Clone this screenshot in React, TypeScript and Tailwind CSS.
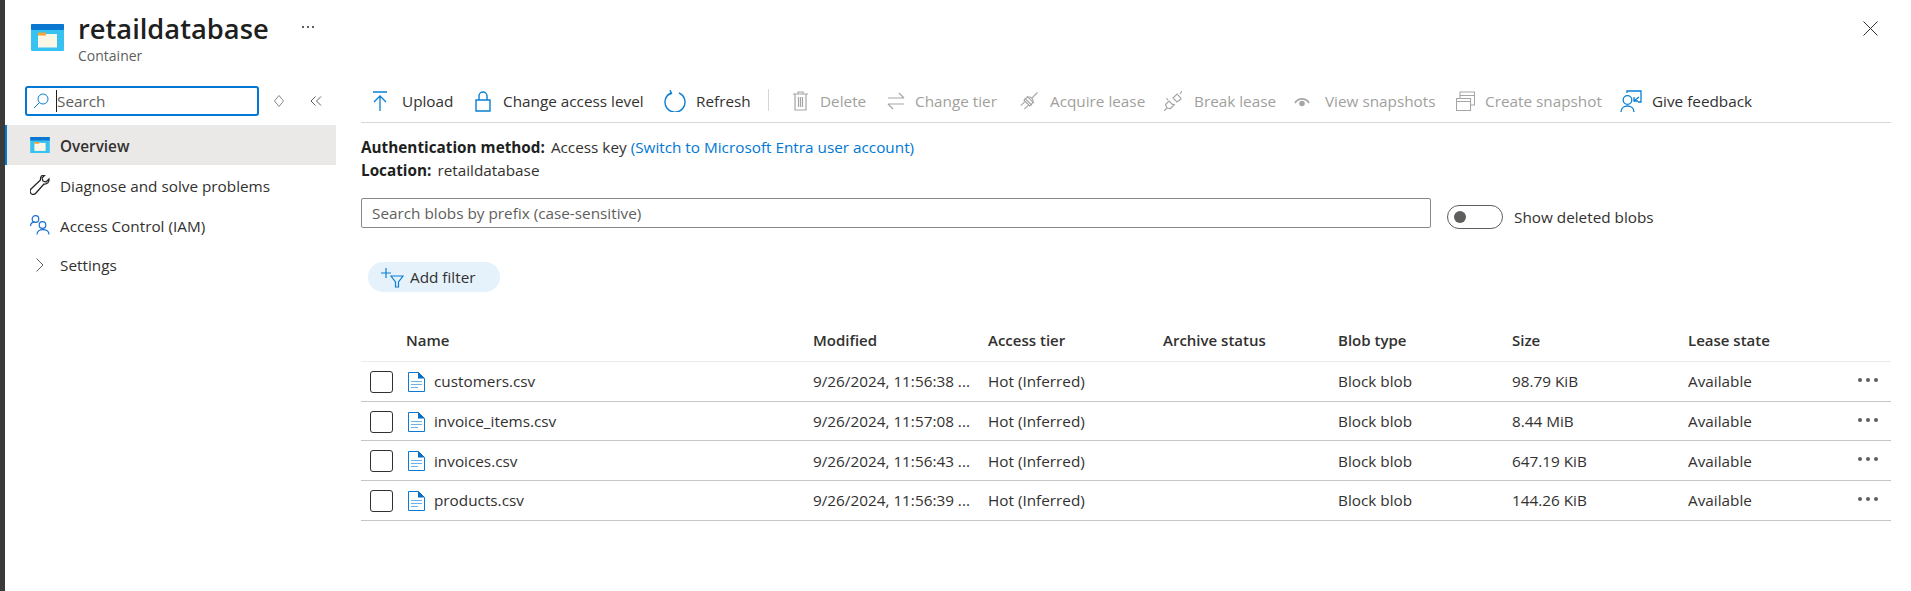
import React from 'react';

const font = "font-['Open_Sans','Liberation_Sans',sans-serif]";

function ContainerIcon({ className }: { className: string }) {
  return (
    <svg viewBox="0 0 33 27" className={className}>
      <rect x="0" y="0" width="33" height="27" rx="1" fill="#37c2f1" />
      <rect x="0" y="0" width="33" height="6" rx="1" fill="#0a78d1" />
      <rect x="7" y="10" width="19" height="13.5" fill="#fbf6e6" />
      <rect x="7" y="8.5" width="8" height="3" fill="#f0a43a" />
    </svg>
  );
}

function FileIcon() {
  return (
    <svg viewBox="0 0 17 20" className="w-[17px] h-[20px] shrink-0">
      <path d="M.5.5h10l6 6v13H.5z" fill="#fff" stroke="#0a7ad6" />
      <path d="M10 0l7 6.5h-7z" fill="#0a6fc2" />
      <path d="M3 9.5h11M3 12.5h11M3 15.5h7" stroke="#6cb2ee" strokeWidth="1.2" />
    </svg>
  );
}

const icon = 'fill-none stroke-current';

const tools = [
  {
    label: 'Upload', w: 'w-[102px]', gap: 'gap-[15px]', on: true,
    svg: <svg viewBox="0 0 14 20" className={`w-[14px] h-[20px] text-[#0b7fd4] ${icon}`}><path d="M0 1h14M7 20V5M1 11l6-6 6 6" strokeWidth="1.3" /></svg>,
  },
  {
    label: 'Change access level', w: 'w-[189px]', gap: 'gap-[12px]', on: true,
    svg: <svg viewBox="0 0 16 21" className={`w-[16px] h-[21px] text-[#0b7fd4] ${icon}`}><path d="M1 9h14v11H1zM4 9V5a4 4 0 0 1 8 0v4" strokeWidth="1.4" /></svg>,
  },
  {
    label: 'Refresh', w: 'w-[129px]', gap: 'gap-[10px]', on: true,
    svg: <svg viewBox="0 0 22 22" className={`w-[22px] h-[22px] text-[#0b7fd4] ${icon}`}><path d="M7 3a10 10 0 1 0 8 0M6 0l1.500 3.500L4 5" strokeWidth="1.4" /></svg>,
  },
  {
    label: 'Delete', w: 'w-[94px]', gap: 'gap-[12px]', on: false,
    svg: <svg viewBox="0 0 15 20" className={`w-[15px] h-[20px] text-[#a6a6a6] ${icon}`}><path d="M0 3h15M5 3V1h5v2M2 3v16h11V3M5.500 6v10M7.500 6v10M9.500 6v10" strokeWidth="1.2" /></svg>,
  },
  {
    label: 'Change tier', w: 'w-[133px]', gap: 'gap-[10px]', on: false,
    svg: <svg viewBox="0 0 18 18" className={`w-[18px] h-[18px] text-[#a6a6a6] ${icon}`}><path d="M1 6h16M12 1l5 5M17 12H1M6 17l-5-5" strokeWidth="1.2" /></svg>,
  },
  {
    label: 'Acquire lease', w: 'w-[144px]', gap: 'gap-[12px]', on: false,
    svg: (
      <svg viewBox="0 0 18 20" className={`w-[18px] h-[20px] text-[#a6a6a6] ${icon}`}>
        <g transform="rotate(45 9 10)" strokeWidth="1.200">
          <path d="M5 7h8v3a4 4 0 0 1-8 0zM9 14v8M6.500 7V1M11.500 7V1" transform="rotate(180 9 10)" />
          <path d="M4 8h10M4 11h10" />
        </g>
      </svg>
    ),
  },
  {
    label: 'Break lease', w: 'w-[130px]', gap: 'gap-[12px]', on: false,
    svg: (
      <svg viewBox="0 0 18 20" className={`w-[18px] h-[20px] text-[#a6a6a6] ${icon}`}>
        <path d="M0 20l3-3M3 17l-1.500-3.500 3.500-3.500 4.500 4.500-3 3zM4 9l-1.500-1.500M9 13l2 1M10 8l-1-1 4-4 3 3 1 2-4 3zM16 3l2-3" strokeWidth="1.200" />
      </svg>
    ),
  },
  {
    label: 'View snapshots', w: 'w-[162px]', gap: 'gap-[15px]', on: false,
    svg: <svg viewBox="0 0 16 12" className="w-[16px] h-[12px] text-[#a6a6a6]"><path d="M1 8a8 8 0 0 1 14 0" fill="none" stroke="currentColor" strokeWidth="1.800" /><circle cx="8" cy="8.500" r="2.800" fill="currentColor" /></svg>,
  },
  {
    label: 'Create snapshot', w: 'w-[164px]', gap: 'gap-[10px]', on: false,
    svg: <svg viewBox="0 0 19 20" className={`w-[19px] h-[20px] text-[#a6a6a6] ${icon}`}><path d="M.5 7.500h14v12H.5zM.5 10.500h14M4 7V4.500h14.500M4 4.500V1h14.500v13H15" strokeWidth="1.100" /></svg>,
  },
  {
    label: 'Give feedback', w: 'w-[140px]', gap: 'gap-[10px]', on: true,
    svg: <svg viewBox="0 0 22 22" className={`w-[22px] h-[22px] text-[#0b7fd4] ${icon}`}><path d="M7 3V1h14v11h-3M19 7l-5 4M14 7v4h4" strokeWidth="1.300" /><circle cx="7.500" cy="10" r="4.300" strokeWidth="1.300" /><path d="M1 22c0-8 13-8 13 0" strokeWidth="1.300" /></svg>,
  },
];

const columns = [
  { label: 'Name', w: 'w-[407px]' },
  { label: 'Modified', w: 'w-[175px]' },
  { label: 'Access tier', w: 'w-[175px]' },
  { label: 'Archive status', w: 'w-[175px]' },
  { label: 'Blob type', w: 'w-[174px]' },
  { label: 'Size', w: 'w-[176px]' },
  { label: 'Lease state', w: 'w-[170px]' },
];

const blobs = [
  { name: 'customers.csv', modified: '9/26/2024, 11:56:38 ...', size: '98.79 KiB' },
  { name: 'invoice_items.csv', modified: '9/26/2024, 11:57:08 ...', size: '8.44 MiB' },
  { name: 'invoices.csv', modified: '9/26/2024, 11:56:43 ...', size: '647.19 KiB' },
  { name: 'products.csv', modified: '9/26/2024, 11:56:39 ...', size: '144.26 KiB' },
];

export default function App() {
  return (
    <div className={`flex h-[591px] bg-white text-[#323130] text-[15.3px] overflow-hidden ${font}`}>
      <div className="w-[5px] bg-[#3b3a39] shrink-0" />
      <div className="flex-1 flex flex-col min-w-0">
        <header className="h-[70px] flex shrink-0">
          <div className="w-[73px] pl-[26px] pt-[24px]">
            <ContainerIcon className="w-[33px] h-[27px]" />
          </div>
          <div className="pt-[11px] w-[224px]">
            <div className="text-[27.3px] leading-[36px] font-semibold text-[#201f1e]">retaildatabase</div>
            <div className="text-[14px] leading-[18px] text-[#605e5c]">Container</div>
          </div>
          <div className="flex gap-[3px] pt-[26px]">
            <i className="w-[2px] h-[2px] bg-[#605e5c]" />
            <i className="w-[2px] h-[2px] bg-[#605e5c]" />
            <i className="w-[2px] h-[2px] bg-[#605e5c]" />
          </div>
          <svg viewBox="0 0 15 15" className="ml-auto mr-[33px] mt-[21px] w-[15px] h-[15px] text-[#323130]">
            <path d="M.5.5l14 14M14.500.5l-14 14" stroke="currentColor" />
          </svg>
        </header>
        <div className="flex flex-1">
          <aside className="w-[331px] shrink-0">
            <div className="flex items-center h-[55px] pl-[20px] pt-[16px] pb-[9px]">
              <div className="w-[234px] h-[30px] border-2 border-[#0078d4] rounded-[3px] flex items-center pl-[6px] gap-[7px]">
                <svg viewBox="0 0 16 16" className="w-[16px] h-[16px] text-[#0b7fd4]">
                  <circle cx="10" cy="6" r="5" fill="none" stroke="currentColor" />
                  <path d="M6.500 9.500L1 15" stroke="currentColor" />
                </svg>
                <span className="border-l border-[#201f1e] text-[#605e5c] leading-[22px]">Search</span>
              </div>
              <svg viewBox="0 0 10 12" className="ml-[15px] w-[10px] h-[12px] text-[#8a8886]">
                <path d="M5 .5L9.500 6 5 11.500.5 6z" fill="none" stroke="currentColor" />
              </svg>
              <svg viewBox="0 0 12 10" className="ml-[26px] w-[12px] h-[10px] text-[#605e5c]">
                <path d="M5.500.5L1 5l4.500 4.500M11 .5L6.500 5l4.500 4.500" fill="none" stroke="currentColor" />
              </svg>
            </div>
            <nav>
              <div className="h-[40px] bg-[#ebe9e7] border-l-[2px] border-[#0078d4] flex items-center pl-[23px] gap-[10px] font-semibold">
                <ContainerIcon className="w-[20px] h-[16px]" />
                <span className="pt-[2px]">Overview</span>
              </div>
              <div className="h-[40px] flex items-center pl-[25px] gap-[10px]">
                <svg viewBox="0 0 20 20" className="w-[20px] h-[20px] text-[#201f1e]">
                  <path d="M19 4l-3 3-3-1-1-3 3-3c-3-.5-5 2-4.500 5L1 14c-1 1-1 3 0 4.500s3.500 1 4.500 0L14 9c3 .5 5.500-2 5-5z" fill="none" stroke="currentColor" strokeWidth="1.200" />
                </svg>
                <span className="pt-[2px]">Diagnose and solve problems</span>
              </div>
              <div className="h-[40px] flex items-center pl-[25px] gap-[10px]">
                <svg viewBox="0 0 20 20" className="w-[20px] h-[20px] text-[#1a6fd0] fill-none stroke-current">
                  <circle cx="5.500" cy="4" r="3.300" strokeWidth="1.200" />
                  <circle cx="12.500" cy="10" r="3.300" strokeWidth="1.200" />
                  <path d="M0.500 11c0-2.500 2-4 4.500-4M7 19.500c0-6.500 12-6.500 12 0" strokeWidth="1.200" />
                </svg>
                <span className="pt-[2px]">Access Control (IAM)</span>
              </div>
              <div className="h-[40px] flex items-center pl-[31px] gap-[16px]">
                <svg viewBox="0 0 8 14" className="w-[8px] h-[14px] text-[#605e5c]">
                  <path d="M.5.5L7 7 .5 13.500" fill="none" stroke="currentColor" />
                </svg>
                <span>Settings</span>
              </div>
            </nav>
          </aside>
          <main className="ml-[25px] w-[1530px] shrink-0">
            <div className="h-[53px] border-b border-[#d6d6d6] flex items-center relative pl-[12px] pt-[10px]">
              {tools.map(t => (
                <div key={t.label} className={`flex items-center shrink-0 ${t.w} ${t.gap} ${t.on ? '' : 'text-[#a19f9d]'}`}>
                  {t.svg}
                  <span className="whitespace-nowrap">{t.label}</span>
                </div>
              ))}
              <div className="absolute left-[407px] top-[19px] w-px h-[22px] bg-[#d6d6d6]" />
            </div>
            <div className="pt-[13px] leading-[23px]">
              <div><b className="font-bold text-[#201f1e]">Authentication method:</b> <span className="ml-[2px]">Access key</span> <span className="text-[#0078d4]">(Switch to Microsoft Entra user account)</span></div>
              <div><b className="font-bold text-[#201f1e]">Location:</b> <span className="ml-[2px]">retaildatabase</span></div>
            </div>
            <div className="flex items-start mt-[16px]">
              <div className="w-[1070px] h-[30px] border border-[#8a8886] rounded-[2px] flex items-center pl-[10px] text-[#605e5c]">Search blobs by prefix (case-sensitive)</div>
              <div className="ml-[16px] mt-[7px] w-[56px] h-[24px] border border-[#605e5c] rounded-full flex items-center pl-[6px]">
                <div className="w-[12px] h-[12px] rounded-full bg-[#605e5c]" />
              </div>
              <span className="ml-[11px] mt-[8px]">Show deleted blobs</span>
            </div>
            <div className="mt-[33px] ml-[7px] w-[132px] h-[30px] rounded-full bg-[#e5f1fb] flex items-center pl-[13px] gap-[6px]">
              <svg viewBox="0 0 23 21" className="w-[23px] h-[21px] text-[#0b7fd4] fill-none stroke-current">
                <path d="M0 6h10M5 1v10" strokeWidth="1.200" />
                <path d="M10 9h12l-4.500 6v5h-3v-5z" strokeWidth="1.200" />
              </svg>
              <span>Add filter</span>
            </div>
            <div className="mt-[27px]">
              <div className="h-[43px] flex items-center pl-[45px] border-b border-[#edebe9] font-semibold text-[15px]">
                {columns.map(c => <div key={c.label} className={`${c.w} shrink-0`}>{c.label}</div>)}
              </div>
              {blobs.map(b => (
                <div key={b.name} className="h-[39.700px] pt-[1px] flex items-center border-b border-[#c8c6c4] relative">
                  <div className="w-[45px] pl-[9px] shrink-0">
                    <div className="w-[23px] h-[22px] border border-[#323130] rounded-[3px]" />
                  </div>
                  <div className="w-[407px] shrink-0 flex items-center pl-[2px] gap-[9px]"><FileIcon /><span>{b.name}</span></div>
                  <div className="w-[175px] shrink-0">{b.modified}</div>
                  <div className="w-[175px] shrink-0">Hot (Inferred)</div>
                  <div className="w-[175px] shrink-0" />
                  <div className="w-[174px] shrink-0">Block blob</div>
                  <div className="w-[176px] shrink-0">{b.size}</div>
                  <div className="w-[170px] shrink-0">Available</div>
                  <div className="flex gap-[4px] -mt-[4px]">
                    <i className="w-[4px] h-[4px] rounded-full bg-[#605e5c]" />
                    <i className="w-[4px] h-[4px] rounded-full bg-[#605e5c]" />
                    <i className="w-[4px] h-[4px] rounded-full bg-[#605e5c]" />
                  </div>
                </div>
              ))}
            </div>
          </main>
        </div>
      </div>
    </div>
  );
}
